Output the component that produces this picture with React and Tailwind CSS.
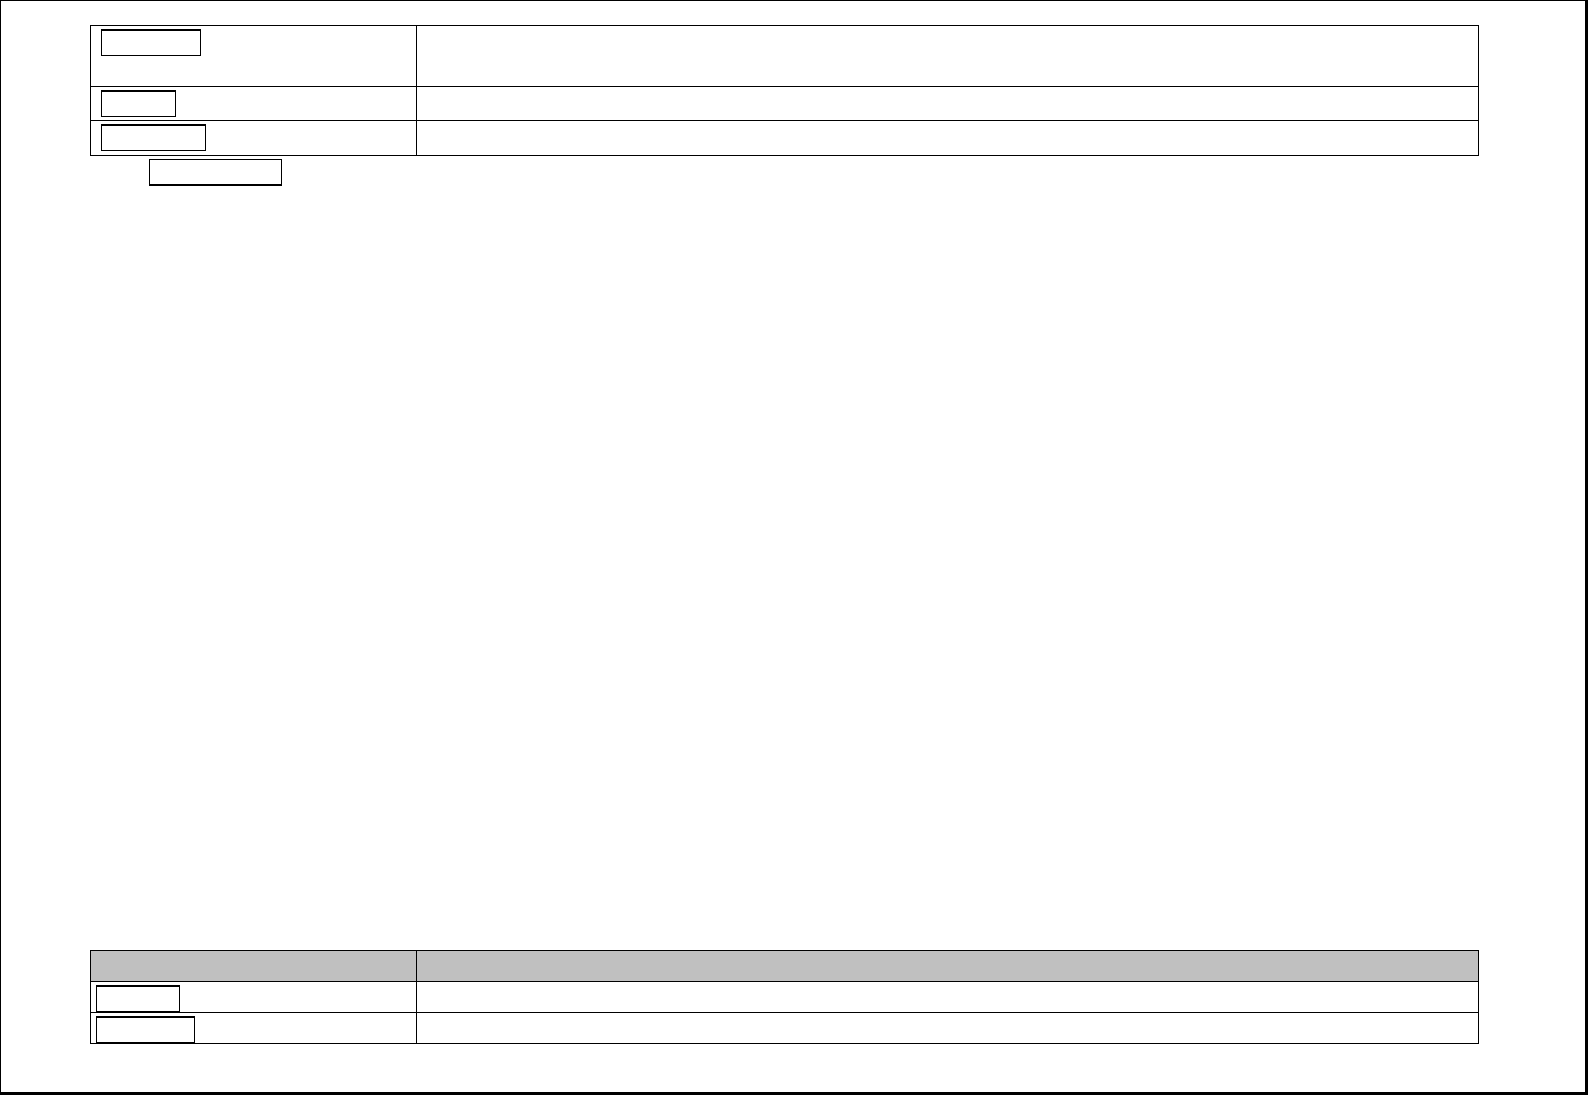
import React from "react";

const Box = ({ w, className = "" }) => (
  <div className={`h-[27px] border border-black bg-white ${w} ${className}`} />
);

const App = () => {
  return (
    <div className="w-[1588px] h-[1095px] bg-white border-l border-t border-r-[3px] border-b-[3px] border-black font-['Liberation_Sans',sans-serif] overflow-hidden">
      {/* Top table */}
      <div className="ml-[89px] mt-[24px] w-[1389px] border border-black">
        <div className="flex h-[61px] border-b border-black">
          <div className="w-[326px] border-r border-black pl-[10px] pt-[3px]">
            <Box w="w-[100px]" className="border-t-2" />
          </div>
          <div className="flex-1" />
        </div>
        <div className="flex h-[34px] border-b border-black">
          <div className="w-[326px] border-r border-black pl-[10px] pt-[3px]">
            <Box w="w-[75px]" className="border-t-2" />
          </div>
          <div className="flex-1" />
        </div>
        <div className="flex h-[34px]">
          <div className="w-[326px] border-r border-black pl-[10px] pt-[3px]">
            <Box w="w-[105px]" className="border-t-2" />
          </div>
          <div className="flex-1" />
        </div>
      </div>

      <div className="ml-[148px] mt-[3px]">
        <Box w="w-[133px]" className="border-b-2" />
      </div>

      {/* Bottom table */}
      <div className="ml-[89px] mt-[764px] w-[1389px] border border-black">
        <div className="flex h-[31px] border-b border-black bg-[#c0c0c0]">
          <div className="w-[326px] border-r border-black" />
          <div className="flex-1" />
        </div>
        <div className="flex h-[31px] border-b border-black">
          <div className="w-[326px] border-r border-black pl-[5px] pt-[3px]">
            <Box w="w-[84px]" className="border-t-2" />
          </div>
          <div className="flex-1" />
        </div>
        <div className="flex h-[30px]">
          <div className="w-[326px] border-r border-black pl-[5px] pt-[3px]">
            <Box w="w-[99px]" className="border-t-2" />
          </div>
          <div className="flex-1" />
        </div>
      </div>
    </div>
  );
};

export default App;
